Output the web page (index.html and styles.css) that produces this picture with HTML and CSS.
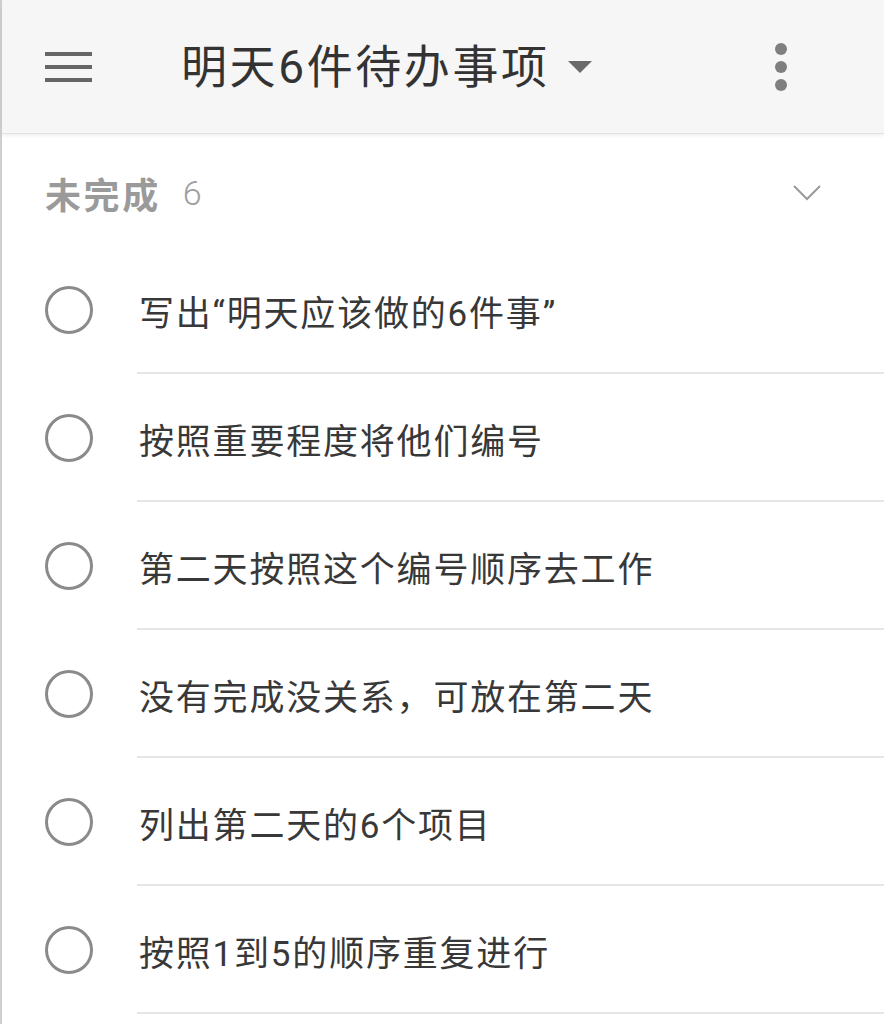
FILE: index.html
```html
<!DOCTYPE html>
<html lang="zh-CN">
<head>
<meta charset="utf-8">
<title>明天6件待办事项</title>
<link rel="stylesheet" href="styles.css">
</head>
<body>
<div class="app">
  <header class="topbar">
    <svg class="menu" width="48" height="30" viewBox="0 0 48 30">
      <rect x="0" y="0" width="47" height="4" fill="#666"/>
      <rect x="0" y="13" width="47" height="4" fill="#666"/>
      <rect x="0" y="26" width="47" height="4" fill="#666"/>
    </svg>
    <h1 class="title">明天6件待办事项</h1>
    <svg class="caret" width="24" height="14" viewBox="0 0 24 14"><polygon points="0,1 24,1 12,13" fill="#6a6a6a"/></svg>
    <svg class="more" width="14" height="52" viewBox="0 0 14 52">
      <circle cx="7" cy="7" r="6" fill="#7f7f7f"/>
      <circle cx="7" cy="25" r="6" fill="#7f7f7f"/>
      <circle cx="7" cy="43" r="6" fill="#7f7f7f"/>
    </svg>
  </header>
  <section class="group">
    <div class="group-head">
      <span class="group-name">未完成</span>
      <span class="group-count">6</span>
      <svg class="chev" width="28" height="16" viewBox="0 0 28 16"><polyline points="1,1 14,14 27,1" fill="none" stroke="#9a9a9a" stroke-width="2"/></svg>
    </div>
    <ul class="tasks">
      <li class="task"><span class="check"></span><span class="label">写出“明天应该做的6件事”</span></li>
      <li class="task"><span class="check"></span><span class="label">按照重要程度将他们编号</span></li>
      <li class="task"><span class="check"></span><span class="label">第二天按照这个编号顺序去工作</span></li>
      <li class="task"><span class="check"></span><span class="label">没有完成没关系，可放在第二天</span></li>
      <li class="task"><span class="check"></span><span class="label">列出第二天的6个项目</span></li>
      <li class="task"><span class="check"></span><span class="label">按照1到5的顺序重复进行</span></li>
    </ul>
  </section>
</div>
</body>
</html>
```
FILE: styles.css
```css
html, body {
  margin: 0;
  padding: 0;
  background: #ffffff;
}
body {
  font-family: "Roboto", "Noto Sans CJK SC", sans-serif;
  overflow: hidden;
}
.app {
  border-left: 2px solid #cfcfcf;
  min-height: 1024px;
  box-sizing: border-box;
}
.topbar {
  height: 134px;
  box-sizing: border-box;
  background: #f6f6f6;
  border-bottom: 1px solid #e2e2e2;
  box-shadow: 0 2px 3px rgba(0,0,0,0.06);
  display: flex;
  align-items: center;
  padding-left: 43px;
  position: relative;
}
.menu {
  display: block;
}
.title {
  margin: 0 0 0 88px;
  font-family: "Roboto", "Noto Sans CJK SC", sans-serif;
  font-size: 46px;
  font-weight: 400;
  letter-spacing: 2.6px;
  color: #333;
  line-height: 1;
}
.caret {
  display: block;
  margin-left: 18px;
}
.more {
  display: block;
  margin-left: 182px;
  margin-top: 2px;
}
.group-head {
  height: 112px;
  display: flex;
  align-items: center;
  padding-left: 43px;
  padding-top: 6px;
  box-sizing: border-box;
}
.group-name {
  font-size: 36px;
  font-weight: 700;
  color: #9a9a9a;
  letter-spacing: 2.6px;
}
.group-count {
  font-size: 34px;
  color: #9e9e9e;
  margin-left: 22px;
  font-family: "Roboto", sans-serif;
  font-weight: 300;
}
.chev {
  display: block;
  margin-left: auto;
  margin-right: 63px;
  margin-top: 0;
}
.tasks {
  list-style: none;
  margin: 0;
  padding: 0;
}
.task {
  height: 128px;
  box-sizing: border-box;
  display: flex;
  align-items: center;
  position: relative;
}
.task::after {
  content: "";
  position: absolute;
  left: 135px;
  right: 0;
  bottom: 0;
  height: 2px;
  background: #e6e6e6;
}
.check {
  width: 48px;
  height: 48px;
  box-sizing: border-box;
  border: 3px solid #8a8a8a;
  border-radius: 50%;
  margin-left: 43px;
  flex: none;
}
.label {
  margin-left: 46px;
  font-size: 35px;
  color: #383838;
  letter-spacing: 1.8px;
}
```
